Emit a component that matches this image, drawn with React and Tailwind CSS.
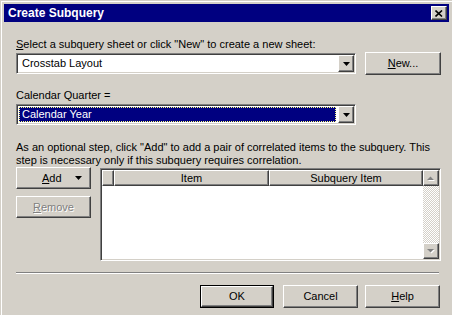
const raised =
  "border border-t-white border-l-white border-r-[#404040] border-b-[#404040] shadow-[inset_-1px_-1px_#808080]";
const sunken =
  "border border-t-[#808080] border-l-[#808080] border-r-white border-b-white shadow-[inset_1px_1px_#404040,inset_-1px_-1px_#d4d0c8]";

function DownArrow({ color = "#000" }) {
  return (
    <svg width="7" height="4" viewBox="0 0 7 4">
      <path d="M0 0h7L3.5 4z" fill={color} />
    </svg>
  );
}

function Combo({ children, selected }) {
  return (
    <div className={`flex h-[21px] w-[340px] bg-white p-[1px] ${sunken}`}>
      {selected ? (
        <div className="flex flex-1 items-center m-[1px] mr-[2px] bg-[#000080] border border-dotted border-[#ffff80] pl-[2px] text-white">
          {children}
        </div>
      ) : (
        <div className="flex flex-1 items-center pl-[4px]">{children}</div>
      )}
      <div className={`flex h-full w-[16px] items-center justify-center bg-[#d4d0c8] ${raised}`}>
        <DownArrow />
      </div>
    </div>
  );
}

function Button({ children, className = "", isDefault }) {
  if (isDefault) {
    return (
      <div className={`border border-black ${className}`}>
        <div className={`flex h-full items-center justify-center ${raised}`}>{children}</div>
      </div>
    );
  }
  return (
    <div className={`flex items-center justify-center ${raised} ${className}`}>{children}</div>
  );
}

function ScrollArrow({ up }) {
  return (
    <svg width="8" height="5" viewBox="0 0 8 5">
      {up ? (
        <>
          <path d="M1 5h7L4.5 1.5z" fill="#fff" />
          <path d="M0 4h7L3.5 0.5z" fill="#808080" />
        </>
      ) : (
        <>
          <path d="M1 1h7L4.5 4.5z" fill="#fff" />
          <path d="M0 0h7L3.5 3.5z" fill="#808080" />
        </>
      )}
    </svg>
  );
}

export default function App() {
  return (
    <div className="w-[452px] h-[315px] overflow-hidden bg-[#d4d0c8] text-[11px] leading-[13px] text-black font-['Liberation_Sans',Arial,sans-serif]">
      <div className="h-full border-t border-l border-[#d4d0c8]">
        <div className="h-full border-t border-l border-white pt-[2px] pl-[2px] pr-[3px]">
          {/* Title bar */}
          <div className="flex h-[18px] items-center justify-between bg-[#000080] pl-[4px] pr-[2px]">
            <span className="font-bold text-white text-[12px]">Create Subquery</span>
            <div className={`flex h-[14px] w-[16px] items-center justify-center bg-[#d4d0c8] ${raised}`}>
              <svg width="8" height="7" viewBox="0 0 8 7">
                <path d="M0.5 0.5L7 6.5M7 0.5L0.5 6.5" stroke="#000" strokeWidth="1.6" />
              </svg>
            </div>
          </div>

          <div className="pl-[12px] w-[437px]">
            <div className="mt-[16px] whitespace-nowrap">
              <span className="underline">S</span>elect a subquery sheet or click &quot;New&quot; to create a
              new sheet:
            </div>
            <div className="mt-[1px] flex items-start">
              <div className="mt-[1px]">
                <Combo>Crosstab Layout</Combo>
              </div>
              <Button className="ml-[9px] h-[23px] w-[76px]">
                <span>
                  <span className="underline">N</span>ew...
                </span>
              </Button>
            </div>

            <div className="mt-[14px]">Calendar Quarter =</div>
            <div className="mt-[2px]">
              <Combo selected>Calendar Year</Combo>
            </div>

            <div className="mt-[16px] whitespace-nowrap">
              As an optional step, click &quot;Add&quot; to add a pair of correlated items to the subquery. This
              <br />
              step is necessary only if this subquery requires correlation.
            </div>

            <div className="flex items-start">
              <div className="flex flex-col w-[75px]">
                <Button className="h-[22px] justify-start">
                  <span className="ml-[25px]">
                    <span className="underline">A</span>dd
                  </span>
                  <span className="ml-[13px] flex">
                    <DownArrow />
                  </span>
                </Button>
                <Button className="mt-[7px] h-[22px] justify-start">
                  <span className="ml-[16px] text-[#808080] [text-shadow:1px_1px_0_#fff]">
                    <span className="underline">R</span>emove
                  </span>
                </Button>
              </div>

              {/* List */}
              <div className={`ml-[9px] mt-[1px] h-[93px] w-[341px] bg-white p-[1px] flex ${sunken}`}>
                <div className="flex-1 flex flex-col">
                  <div className="flex h-[16px] bg-[#d4d0c8]">
                    <div className={`w-[12px] ${raised}`} />
                    <div className={`w-[155px] flex items-center justify-center ${raised}`}>Item</div>
                    <div className={`flex-1 flex items-center justify-center ${raised}`}>Subquery Item</div>
                  </div>
                  <div className="flex-1 bg-white" />
                </div>
                <div className="flex w-[16px] flex-col">
                  <div className={`flex h-[16px] items-center justify-center bg-[#d4d0c8] ${raised}`}>
                    <ScrollArrow up />
                  </div>
                  <div className="flex-1 bg-[repeating-conic-gradient(#ffffff_0%_25%,#d4d0c8_0%_50%)] bg-[length:2px_2px]" />
                  <div className={`flex h-[16px] items-center justify-center bg-[#d4d0c8] ${raised}`}>
                    <ScrollArrow />
                  </div>
                </div>
              </div>
            </div>

            <div className="mt-[11px] w-[423px] border-t border-t-[#808080] border-b border-b-white" />

            <div className="mt-[11px] flex">
              <Button isDefault className="ml-[184px] h-[23px] w-[74px]">
                OK
              </Button>
              <Button className="ml-[9px] h-[23px] w-[75px]">Cancel</Button>
              <Button className="ml-[7px] h-[23px] w-[75px]">
                <span>
                  <span className="underline">H</span>elp
                </span>
              </Button>
            </div>
          </div>
        </div>
      </div>
    </div>
  );
}
